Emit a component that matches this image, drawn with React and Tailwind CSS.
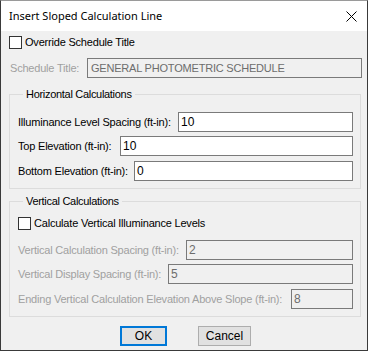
const font = { fontFamily: '"Liberation Sans", Arial, sans-serif' };

function Field({ label, value, disabled, inputWidth }) {
  return (
    <div className="flex items-center h-[20px]">
      <span className={`text-[11px] tracking-[-0.2px] leading-none whitespace-nowrap ${disabled ? 'text-[#a0a0a0]' : 'text-black'}`}>{label}</span>
      <div
        className={`ml-auto h-[20px] border border-[#7a7a7a] flex items-center pl-[2px] text-[12px] ${
          disabled ? 'bg-[#f0f0f0] text-[#6d6d6d]' : 'bg-white text-black'
        }`}
        style={{ width: inputWidth }}
      >
        {value}
      </div>
    </div>
  );
}

function Check({ label }) {
  return (
    <div className="flex items-center h-[13px]">
      <span className="w-[13px] h-[13px] border border-[#333] bg-white shrink-0" />
      <span className="ml-[3px] text-[11px] tracking-[-0.2px] leading-none text-black">{label}</span>
    </div>
  );
}

export default function App() {
  return (
    <div className="w-[368px] h-[351px] border border-[#3a3a3a] border-t-[#9a9a9a] flex flex-col bg-[#f0f0f0]" style={font}>
      <div className="h-[30px] bg-white flex items-center pl-[8px] pr-[10px] shrink-0">
        <span className="text-[11px] text-black" style={{ fontFamily: '"Noto Sans", "Open Sans", sans-serif' }}>
          Insert Sloped Calculation Line
        </span>
        <svg className="ml-auto" width="11" height="11" viewBox="0 0 11 11">
          <path d="M0.5 0.5 L10.5 10.5 M10.5 0.5 L0.5 10.5" stroke="#000" strokeWidth="1" />
        </svg>
      </div>

      <div className="flex-1 pl-[8px] pr-[5px] pt-[5px]">
        <Check label="Override Schedule Title" />

        <div className="mt-[9px] flex items-center h-[20px] pl-[1px]">
          <span className="text-[11px] tracking-[-0.2px] text-[#a0a0a0]">Schedule Title:</span>
          <div className="ml-auto w-[275px] h-[20px] border border-[#7a7a7a] bg-[#f0f0f0] flex items-center pl-[3px] text-[11px] tracking-[-0.2px] text-[#6d6d6d]">
            GENERAL PHOTOMETRIC SCHEDULE
          </div>
        </div>

        <fieldset className="mt-[10px] w-[352px] border border-[#dcdcdc] pl-[8px] pr-[7px] pb-[7px]">
          <legend className="ml-[5px] px-[3px] text-[11px] tracking-[-0.3px] leading-[13px] text-black">Horizontal Calculations</legend>
          <div className="mt-[11px] flex flex-col gap-[4px]">
            <Field label="Illuminance Level Spacing (ft-in):" value="10" inputWidth={175} />
            <Field label="Top Elevation (ft-in):" value="10" inputWidth={233} />
            <div className="mt-[1px]">
              <Field label="Bottom Elevation (ft-in):" value="0" inputWidth={219} />
            </div>
          </div>
        </fieldset>

        <fieldset className="mt-[6px] w-[352px] border border-[#dcdcdc] pl-[8px] pr-[7px] pb-[7px]">
          <legend className="ml-[5px] px-[3px] text-[11px] tracking-[-0.3px] leading-[13px] text-black">Vertical Calculations</legend>
          <div className="mt-[9px]">
            <Check label="Calculate Vertical Illuminance Levels" />
          </div>
          <div className="mt-[10px] flex flex-col gap-[4px]">
            <Field label="Vertical Calculation Spacing (ft-in):" value="2" inputWidth={167} disabled />
            <Field label="Vertical Display Spacing (ft-in):" value="5" inputWidth={185} disabled />
            <div className="mt-[1px]">
              <Field label="Ending Vertical Calculation Elevation Above Slope (ft-in):" value="8" inputWidth={62} disabled />
            </div>
          </div>
        </fieldset>

        <div className="mt-[9px] flex pl-[111px] gap-[31px]">
          <button className="w-[47px] h-[20px] border-2 border-[#0078d7] bg-[#e1e1e1] text-[12px] text-black leading-none">OK</button>
          <button className="w-[53px] h-[20px] border border-[#adadad] bg-[#e1e1e1] text-[12px] text-black leading-none">Cancel</button>
        </div>
      </div>
    </div>
  );
}
